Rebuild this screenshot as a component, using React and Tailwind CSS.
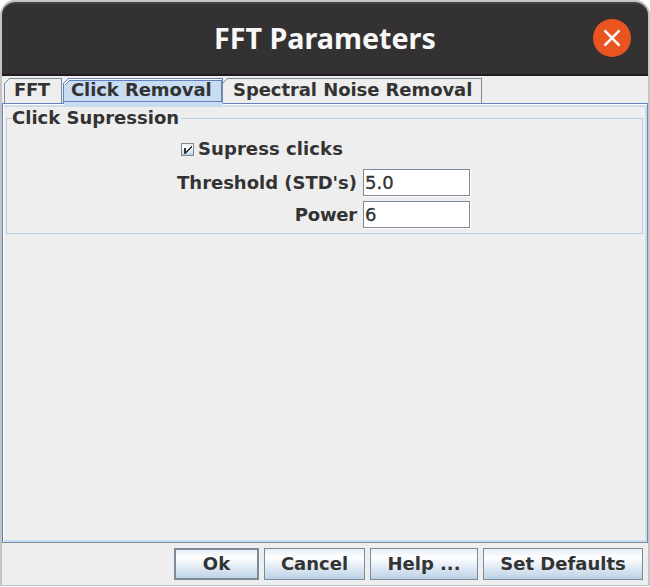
const LABEL = "font-['DejaVu_Sans'] font-bold text-[18px] leading-[21px] whitespace-pre";

function Tab({ className, width, children, tracking }) {
  return (
    <div className={`relative h-[25px] shrink-0 ${className}`}>
      <svg className="absolute inset-0" width={width} height="25" shapeRendering="crispEdges" fill="none" stroke="#7a8a99">
        <path d={`M0.5 25V5.5L5.5 0.5H${width - 0.5}V25`} />
      </svg>
      <span className={`relative block pt-px ${LABEL} ${tracking}`}>{children}</span>
    </div>
  );
}

function SelectedTab() {
  return (
    <div className="relative h-[29px] w-[160px] shrink-0">
      <svg className="absolute inset-0" width="160" height="29" shapeRendering="crispEdges">
        <path d="M0 25V6L6 0H160V25Z" fill="#fff" />
        <path d="M1 29V7L6 3H159V24H160V29Z" fill="#c8ddf2" />
        <path d="M0.5 25V5.5L5.5 0.5H159.5V25M1.5 7.5L6.5 2.5H158.5V23.5H1" fill="none" stroke="#6382bf" />
      </svg>
      <span className={`relative block pl-2 pt-px ${LABEL} tracking-[-0.09px]`}>Click Removal</span>
    </div>
  );
}

function Field({ label, value, tracking }) {
  return (
    <div className="flex h-[28px]">
      <span className={`w-[351px] shrink-0 pt-[3px] text-right ${LABEL} ${tracking}`}>{label}</span>
      <div className="ml-[6px] h-[28px] w-[108px] border-r border-b border-white">
        <div className="h-[27px] w-[107px] border border-[#7a8a99] bg-white pl-[1px] pt-[2px] font-['DejaVu_Sans'] text-[18px] leading-[21px] [-webkit-text-stroke:0.35px_#333]">
          {value}
        </div>
      </div>
    </div>
  );
}

function Button({ children, className }) {
  return (
    <button
      className={`flex h-8 shrink-0 items-center justify-center border-[#7a8a99] bg-linear-to-b from-[#e3ecf5] from-0% via-white via-30% to-[#b8cfe5] to-100% bg-origin-border pb-[2px] text-[#333] ${LABEL} ${className}`}
    >
      {children}
    </button>
  );
}

export default function App() {
  return (
    <div className="h-[587px] w-[650px] overflow-hidden bg-white text-[#333]">
      <div className="flex h-[586px] w-[650px] flex-col rounded-t-[15px] border-x-2 border-t-2 border-b border-[#c4c4c4] bg-[#eee]">
        <header className="flex h-[74px] shrink-0 items-center rounded-t-[13px] border-t-2 border-b-2 border-t-[#464646] border-b-[#211a20] bg-[#333132] pb-[2px]">
          <h1 className="ml-[212px] w-[280px] whitespace-nowrap font-['Noto_Sans'] text-[28.7px] leading-9 font-bold text-[#f7f7f7]">FFT Parameters</h1>
          <button className="ml-[99px] flex size-[38px] items-center justify-center rounded-full bg-[#e95420]">
            <svg width="18" height="18" viewBox="0 0 18 18" stroke="#fff" strokeWidth="2.5" strokeLinecap="round">
              <path d="M2.2 2.2L15.8 15.8M15.8 2.2L2.2 15.8" />
            </svg>
          </button>
        </header>

        <nav className="relative z-10 flex h-[25px] shrink-0 pl-[2px] mt-[2px]">
          <Tab width={58} className="w-[59px] pl-[10px]" tracking="tracking-[-0.4px]">FFT</Tab>
          <SelectedTab />
          <Tab width={260} className="-ml-px w-[260px] pl-[11px]" tracking="tracking-[-0.07px]">Spectral Noise Removal</Tab>
        </nav>

        <main className="h-[440px] shrink-0 border border-t-[#6382bf] border-l-[#6382bf] border-r-[#7a8a99] border-b-[#7a8a99]">
          <div className="h-[438px] border-t border-l border-white">
            <div className="h-[437px] border-t-2 border-r-2 border-b-2 border-[#c8ddf2] pl-[2px]">
              <fieldset className="h-[127px] w-[637px]">
                <div className="flex h-[21px] items-start">
                  <span className="mt-[11px] h-[10px] w-[6px] border-t border-l border-[#b8cfe5]" />
                  <span className={`w-[169px] ${LABEL} tracking-[0.01px]`}>Click Supression</span>
                  <span className="mt-[11px] h-[10px] flex-1 border-t border-r border-[#b8cfe5]" />
                </div>
                <div className="h-[106px] border-r border-b border-l border-[#b8cfe5] pt-[10px]">
                  <div className="flex h-[21px] pl-[174px]">
                    <svg className="mt-[5px]" width="13" height="13" viewBox="0 0 13 13" shapeRendering="crispEdges">
                      <defs>
                        <linearGradient id="check" x2="0" y2="1">
                          <stop offset="0" stopColor="#e3ecf5" />
                          <stop offset=".3" stopColor="#fff" />
                          <stop offset="1" stopColor="#b8cfe5" />
                        </linearGradient>
                      </defs>
                      <rect x=".5" y=".5" width="12" height="12" fill="url(#check)" stroke="#7a8a99" />
                      <path d="M3 5h2v3h1v-1h1v-1h1v-1h1v-1h1v-1h1v2h-1v1h-1v1h-1v1h-1v1h-1v1h-1v1h-2z" fill="#333" transform="translate(0 -.5)" />
                    </svg>
                    <span className={`ml-[4px] ${LABEL} tracking-[0.08px]`}>Supress clicks</span>
                  </div>
                  <div className="mt-[10px] -ml-px flex flex-col gap-1">
                    <Field label="Threshold (STD's)" value="5.0" tracking="tracking-[-0.02px]" />
                    <Field label="Power" value="6" tracking="tracking-[-0.2px]" />
                  </div>
                </div>
              </fieldset>
            </div>
          </div>
        </main>

        <footer className="flex justify-end gap-[5px] pt-[5px] pr-[5px]">
          <Button className="w-[85px] border-2">Ok</Button>
          <Button className="w-[101px] border">Cancel</Button>
          <Button className="w-[108px] border">Help ...</Button>
          <Button className="w-[160px] border">Set Defaults</Button>
        </footer>
      </div>
    </div>
  );
}
